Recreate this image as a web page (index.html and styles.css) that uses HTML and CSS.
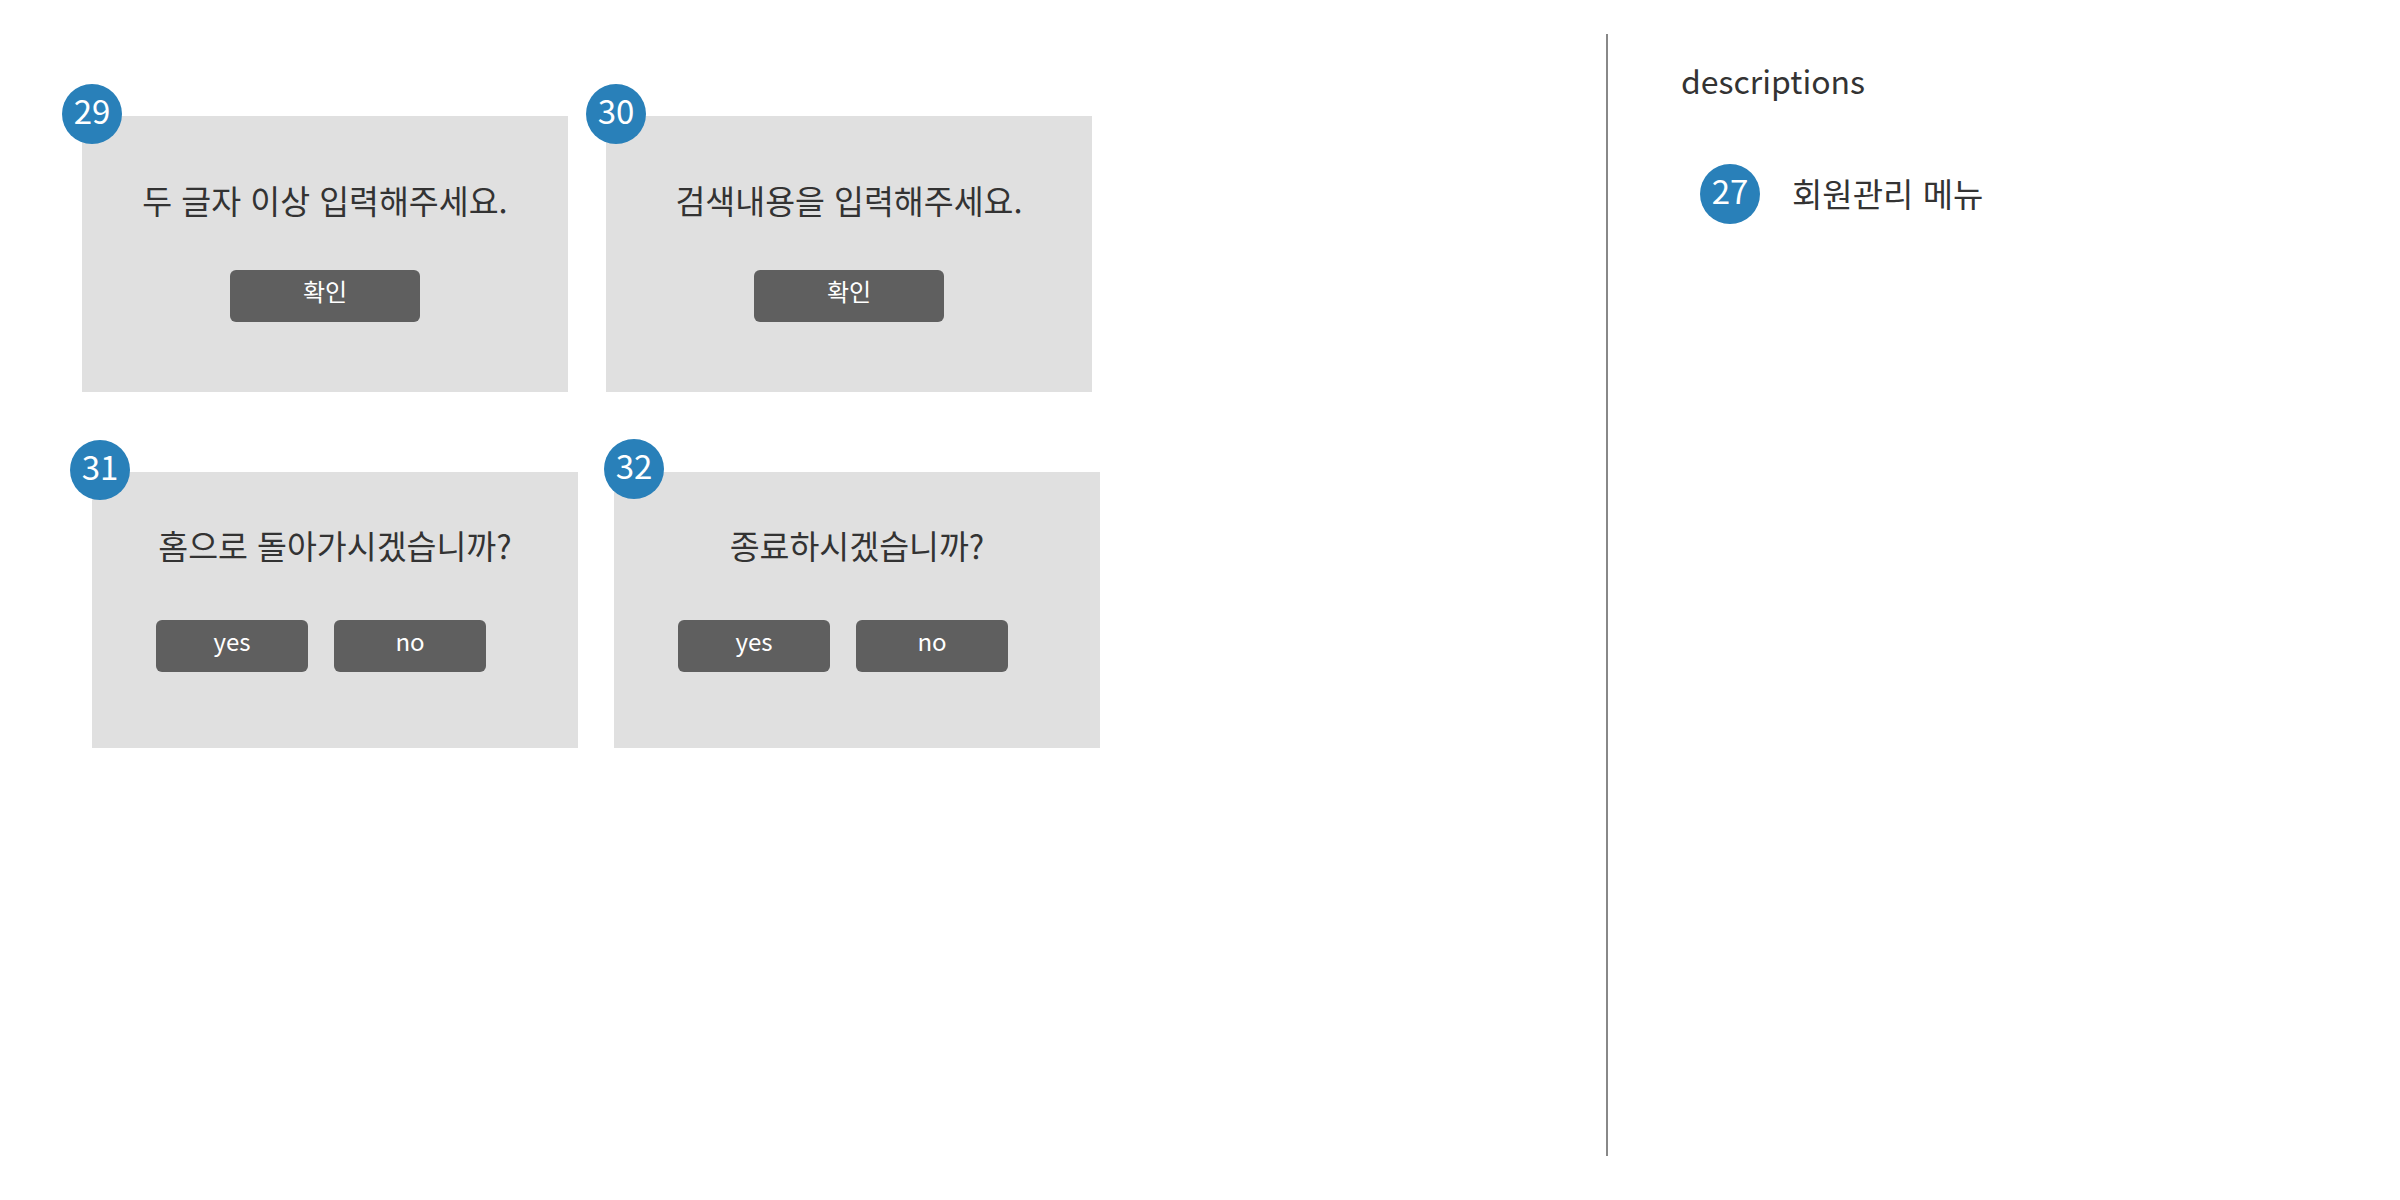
FILE: index.html
```html
<!DOCTYPE html>
<html lang="ko">
<head>
<meta charset="utf-8">
<title>Dialogs</title>
<link rel="stylesheet" href="styles.css">
</head>
<body>
<div class="page">
  <section class="canvas">
    <div class="row row-top">
      <div class="dialog dialog-29">
        <span class="badge badge-29">29</span>
        <p class="msg">두 글자 이상 입력해주세요.</p>
        <div class="actions">
          <button class="btn btn-confirm">확인</button>
        </div>
      </div>
      <div class="dialog dialog-30">
        <span class="badge badge-30">30</span>
        <p class="msg">검색내용을 입력해주세요.</p>
        <div class="actions">
          <button class="btn btn-confirm">확인</button>
        </div>
      </div>
    </div>
    <div class="row row-bottom">
      <div class="dialog dialog-31 dialog-question">
        <span class="badge badge-31">31</span>
        <p class="msg">홈으로 돌아가시겠습니까?</p>
        <div class="actions actions-pair">
          <button class="btn btn-choice">yes</button>
          <button class="btn btn-choice">no</button>
        </div>
      </div>
      <div class="dialog dialog-32 dialog-question">
        <span class="badge badge-32">32</span>
        <p class="msg">종료하시겠습니까?</p>
        <div class="actions actions-pair">
          <button class="btn btn-choice">yes</button>
          <button class="btn btn-choice">no</button>
        </div>
      </div>
    </div>
  </section>
  <div class="divider"></div>
  <aside class="desc">
    <h2 class="desc-title">descriptions</h2>
    <ul class="desc-list">
      <li class="desc-item">
        <span class="badge badge-inline">27</span>
        <span class="desc-text">회원관리 메뉴</span>
      </li>
    </ul>
  </aside>
</div>
</body>
</html>
```

FILE: styles.css
```css
* {
  box-sizing: border-box;
}

html, body {
  margin: 0;
  padding: 0;
  background: #ffffff;
}

body {
  font-family: "Noto Sans CJK KR", "Noto Sans", sans-serif;
  color: #333333;
}

.page {
  display: flex;
  width: 2400px;
  height: 1200px;
}

.canvas {
  width: 1606px;
  flex: 0 0 1606px;
}

.row {
  display: flex;
}

.row-top {
  margin-top: 116px;
  padding-left: 82px;
  gap: 38px;
}

.row-bottom {
  margin-top: 80px;
  padding-left: 92px;
  gap: 36px;
}

.dialog {
  position: relative;
  width: 486px;
  height: 276px;
  background: #e0e0e0;
  display: flex;
  flex-direction: column;
  align-items: center;
  padding-top: 64px;
}

.dialog-question {
  padding-top: 53px;
}

.msg {
  margin: 0;
  font-size: 32.5px;
  line-height: 40px;
  height: 40px;
  white-space: nowrap;
  color: #333333;
}

.actions {
  display: flex;
  margin-top: 50px;
}

.actions-pair {
  margin-top: 55px;
  gap: 26px;
  padding-right: 28px;
}

.btn {
  font-family: "Noto Sans CJK KR", "Noto Sans", sans-serif;
  font-size: 24px;
  color: #ffffff;
  background: #5f5f5f;
  border: none;
  border-radius: 6px;
  height: 52px;
  line-height: 42px;
  padding: 0 0 10px 0;
  margin: 0;
  text-align: center;
}

.btn-confirm {
  width: 190px;
}

.btn-choice {
  width: 152px;
}

.badge {
  display: block;
  width: 60px;
  height: 60px;
  border-radius: 50%;
  background: #2980b9;
  color: #ffffff;
  font-size: 33px;
  line-height: 53px;
  padding-bottom: 7px;
  text-align: center;
}

.badge-29,
.badge-30,
.badge-31,
.badge-32 {
  position: absolute;
}

.badge-29 { left: -20px; top: -32px; }
.badge-30 { left: -20px; top: -32px; }
.badge-31 { left: -22px; top: -32px; }
.badge-32 { left: -10px; top: -33px; }

.divider {
  flex: 0 0 2px;
  width: 2px;
  height: 1122px;
  margin-top: 34px;
  background: #888888;
}

.desc {
  padding-left: 73px;
}

.desc-title {
  margin: 54px 0 0 0;
  font-size: 32px;
  line-height: 52px;
  font-weight: 400;
  color: #333333;
}

.desc-list {
  list-style: none;
  margin: 58px 0 0 0;
  padding: 0 0 0 19px;
}

.desc-item {
  display: flex;
  align-items: center;
  gap: 32px;
}

.badge-inline {
  flex: 0 0 60px;
}

.desc-text {
  font-size: 33px;
  line-height: 40px;
  padding-bottom: 2px;
  color: #333333;
}
```
